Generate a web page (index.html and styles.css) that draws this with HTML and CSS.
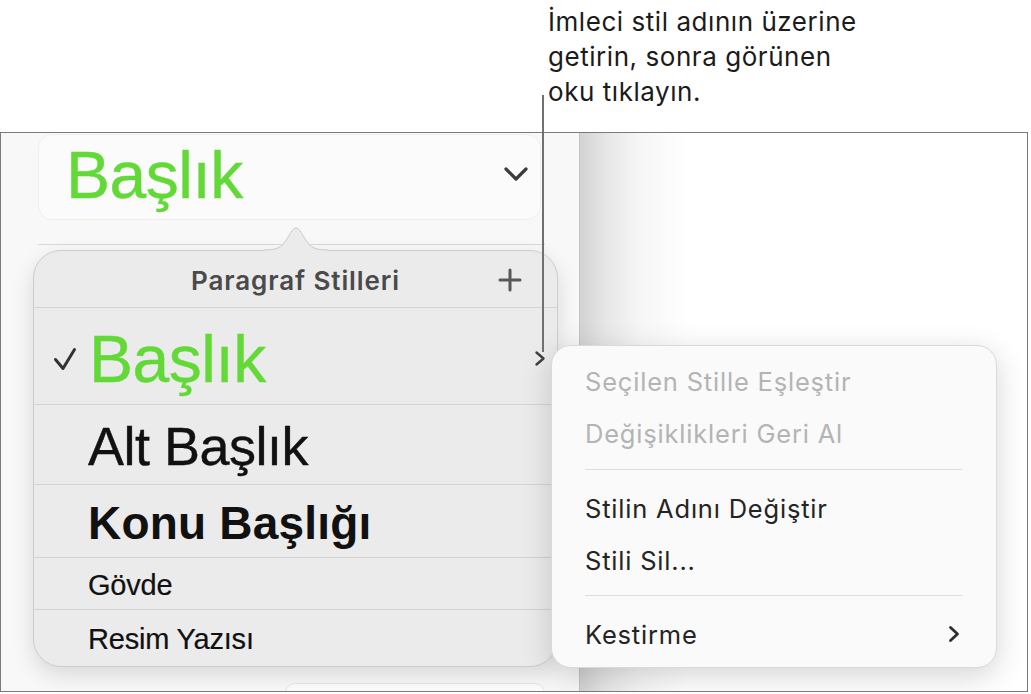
FILE: index.html
```html
<!DOCTYPE html>
<html lang="tr">
<head>
<meta charset="utf-8">
<title>Paragraf Stilleri</title>
<link rel="stylesheet" href="styles.css">
</head>
<body>
<div class="page">
  <p class="callout">İmleci stil adının üzerine<br>getirin, sonra görünen<br>oku tıklayın.</p>
  <div class="window">
    <aside class="sidebar">
      <div class="style-btn">
        <span class="style-current">Başlık</span>
        <svg class="chev-down" width="26" height="16" viewBox="0 0 26 16"><path d="M3 3 L13 13 L23 3" fill="none" stroke="#3c3c3c" stroke-width="3.2" stroke-linecap="round" stroke-linejoin="round"/></svg>
      </div>
      <div class="sidebar-sep"></div>
      <div class="next-btn"></div>
    </aside>
    <main class="canvas"></main>

    <div class="popover">
      <svg class="pop-arrow" width="64" height="26" viewBox="0 0 64 26"><path d="M0 26 L0 24 C13 24 17 22 23 13 C27 6 29 2 32 2 C35 2 37 6 41 13 C47 22 51 24 64 24 L64 26 Z" fill="#ebebeb"/><path d="M0 24 C13 24 17 22 23 13 C27 6 29 2 32 2 C35 2 37 6 41 13 C47 22 51 24 64 24" fill="none" stroke="#c9c9c9" stroke-width="1"/></svg>
      <div class="pop-header">
        <span></span>
        <span class="pop-title">Paragraf Stilleri</span>
        <svg class="plus" width="24" height="24" viewBox="0 0 24 24"><path d="M12 2 V22 M2 12 H22" fill="none" stroke="#585858" stroke-width="3" stroke-linecap="round"/></svg>
      </div>
      <div class="pop-row row-title">
        <svg class="check" width="24" height="24" viewBox="0 0 24 24"><path d="M2.5 12.5 L10 21.5 L21.5 2.5" fill="none" stroke="#333" stroke-width="3" stroke-linecap="round" stroke-linejoin="round"/></svg>
        <span class="s-title">Başlık</span>
        <svg class="chev-right" width="12" height="17" viewBox="0 0 12 17"><path d="M2.5 2.5 L9.5 8.5 L2.5 14.5" fill="none" stroke="#404040" stroke-width="2.4" stroke-linecap="round" stroke-linejoin="round"/></svg>
      </div>
      <div class="pop-row row-sub"><span class="s-sub">Alt Başlık</span></div>
      <div class="pop-row row-topic"><span class="s-topic">Konu Başlığı</span></div>
      <div class="pop-row row-body"><span class="s-body">Gövde</span></div>
      <div class="pop-row row-caption"><span class="s-body">Resim Yazısı</span></div>
    </div>

    <div class="submenu">
      <div class="menu-item disabled">Seçilen Stille Eşleştir</div>
      <div class="menu-item disabled">Değişiklikleri Geri Al</div>
      <div class="menu-sep"></div>
      <div class="menu-item">Stilin Adını Değiştir</div>
      <div class="menu-item">Stili Sil...</div>
      <div class="menu-sep sep2"></div>
      <div class="menu-item has-sub"><span>Kestirme</span><svg width="12" height="18" viewBox="0 0 12 18"><path d="M2.5 2.5 L9.5 9 L2.5 15.5" fill="none" stroke="#2e2e2e" stroke-width="2.8" stroke-linecap="round" stroke-linejoin="round"/></svg></div>
    </div>
  </div>
  <div class="callout-line"></div>
</div>
</body>
</html>
```

FILE: styles.css
```css
* { box-sizing: border-box; }
html, body { margin: 0; padding: 0; background: #ffffff; }
body { width: 1031px; height: 694px; overflow: hidden; font-family: Inter, "Noto Sans", sans-serif; }

.page { position: relative; width: 1031px; height: 694px; }

.callout {
  margin: 0;
  height: 132px;
  padding: 4px 0 0 548px;
  font-family: Inter, "Noto Sans", sans-serif;
  font-size: 26px;
  letter-spacing: 0.55px;
  line-height: 35px;
  color: #1b1b1b;
}

.callout-line {
  position: absolute;
  left: 542px;
  top: 95px;
  width: 1.5px;
  height: 257px;
  background: #707070;
}

.window {
  position: relative;
  display: flex;
  width: 1028px;
  height: 560px;
  border: 1px solid #7a7a7a;
  overflow: hidden;
}

.sidebar {
  width: 579px;
  flex: none;
  background: #f8f8f8;
  border-right: 1px solid #c4c4c4;
  display: flex;
  flex-direction: column;
}

.sidebar > * { flex: none; }

.style-btn {
  margin: 1px 38px 0 37px;
  height: 86px;
  border-radius: 14px;
  background: #fbfbfb;
  border: 1px solid #efefef;
  display: flex;
  align-items: flex-start;
  justify-content: space-between;
  padding: 7px 11px 0 27px;
}

.style-current {
  font-family: "Liberation Sans", Arial, sans-serif;
  font-size: 66px;
  line-height: 66px;
  color: #62d936;
  letter-spacing: -0.5px;
  -webkit-text-stroke: 0.4px #62d936;
}

.chev-down { margin-top: 24px; }

.sidebar-sep {
  margin: 24px 34px 0 37px;
  height: 1px;
  background: #d8d8d8;
}

.next-btn {
  margin: 438px 34px 0 284px;
  height: 24px;
  border-radius: 10px;
  background: #fcfcfc;
  border: 1px solid #e6e6e6;
}

.canvas {
  flex: 1;
  background: linear-gradient(to right, #d2d2d2 0px, #e6e6e6 25px, #f6f6f6 60px, #ffffff 110px);
}

.popover {
  position: absolute;
  left: 32px;
  top: 117px;
  width: 525px;
  height: 417px;
  background: #ebebeb;
  border: 1px solid #cdcdcd;
  border-radius: 28px;
  box-shadow: 0 8px 22px rgba(0, 0, 0, 0.13);
  display: flex;
  flex-direction: column;
}

.popover > * { flex: none; }

.pop-arrow {
  position: absolute;
  left: 230px;
  top: -25px;
}

.pop-header {
  height: 57px;
  border-bottom: 1px solid #d3d3d3;
  display: grid;
  grid-template-columns: 1fr auto 1fr;
  align-items: center;
  padding: 2px 35px 0 35px;
}

.pop-title {
  font-family: Inter, "Noto Sans", sans-serif;
  font-weight: 600;
  font-size: 26px;
  letter-spacing: 0.9px;
  color: #4a4a4a;
}

.plus { justify-self: end; }

.pop-row {
  display: flex;
  align-items: center;
  border-bottom: 1px solid #d3d3d3;
  padding: 3px 0 0 54px;
  font-family: "Liberation Sans", Arial, sans-serif;
  color: #111111;
}

.row-title { height: 97px; padding: 6px 11px 0 19px; }
.row-sub { height: 80px; }
.row-topic { height: 73px; }
.row-body { height: 52px; }
.row-caption { height: 56px; border-bottom: none; }

.check { margin-right: 12px; }
.chev-right { margin-left: auto; margin-top: -2px; }

.s-title { font-size: 66px; line-height: 66px; color: #62d936; letter-spacing: -0.5px; -webkit-text-stroke: 0.4px #62d936; }
.s-sub { font-size: 54px; line-height: 54px; letter-spacing: -0.5px; -webkit-text-stroke: 0.4px #111111; }
.s-topic { font-size: 46px; line-height: 46px; font-weight: 700; letter-spacing: 0.2px; }
.s-body { font-size: 29px; line-height: 29px; letter-spacing: -0.2px; -webkit-text-stroke: 0.2px #111111; }

.submenu {
  position: absolute;
  left: 550px;
  top: 212px;
  width: 446px;
  height: 323px;
  background: #fafafa;
  border: 1px solid #d9d9d9;
  border-radius: 20px;
  box-shadow: 0 8px 30px rgba(0, 0, 0, 0.17);
  padding: 9px 0 0;
  display: flex;
  flex-direction: column;
}

.submenu > * { flex: none; }

.menu-item {
  height: 52px;
  display: flex;
  align-items: center;
  justify-content: space-between;
  padding: 0 36px 0 33px;
  font-family: Inter, "Noto Sans", sans-serif;
  font-size: 25.5px;
  letter-spacing: 0.8px;
  color: #242424;
}

.menu-item.disabled { color: #b4b4b4; }

.menu-sep {
  height: 1px;
  margin: 10px 34px 12px 33px;
  background: #dddddd;
}

.menu-sep.sep2 { margin-top: 9px; }
```
